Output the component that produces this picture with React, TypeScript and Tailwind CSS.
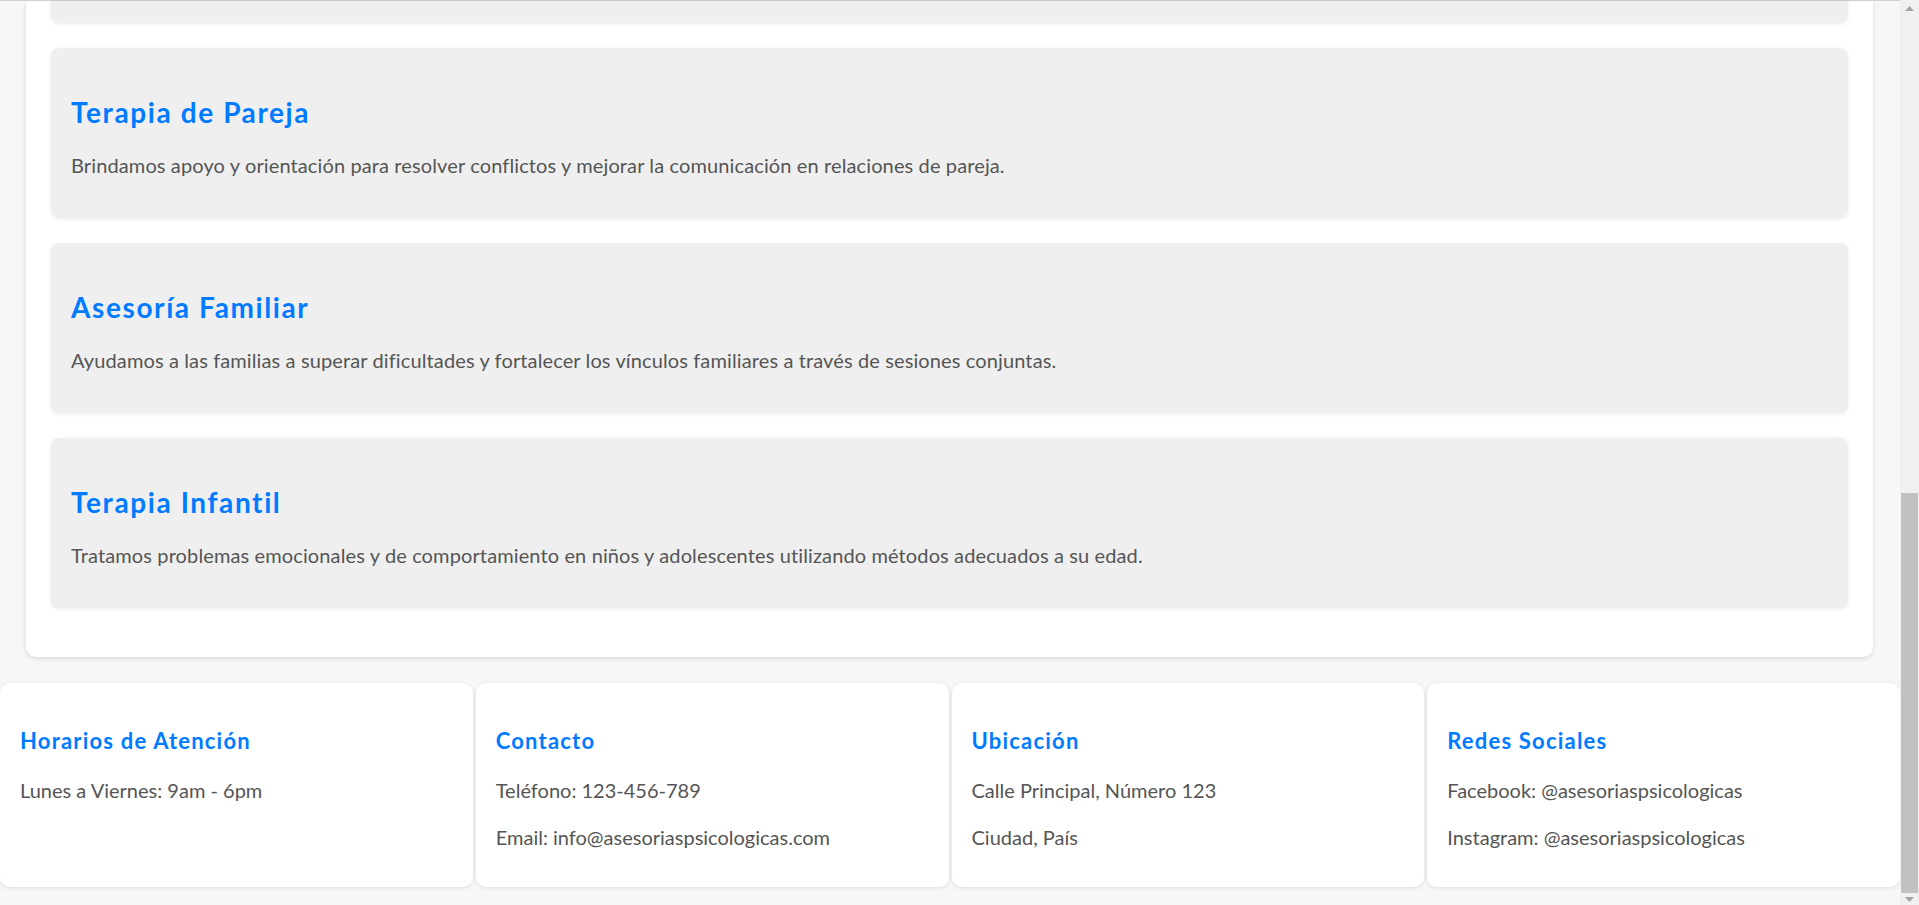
import React from "react";

const servicios = [
  {
    titulo: "Terapia de Pareja",
    texto:
      "Brindamos apoyo y orientación para resolver conflictos y mejorar la comunicación en relaciones de pareja.",
  },
  {
    titulo: "Asesoría Familiar",
    texto:
      "Ayudamos a las familias a superar dificultades y fortalecer los vínculos familiares a través de sesiones conjuntas.",
  },
  {
    titulo: "Terapia Infantil",
    texto:
      "Tratamos problemas emocionales y de comportamiento en niños y adolescentes utilizando métodos adecuados a su edad.",
  },
];

const footer = [
  { titulo: "Horarios de Atención", lineas: ["Lunes a Viernes: 9am - 6pm"] },
  {
    titulo: "Contacto",
    lineas: ["Teléfono: 123-456-789", "Email: info@asesoriaspsicologicas.com"],
  },
  { titulo: "Ubicación", lineas: ["Calle Principal, Número 123", "Ciudad, País"] },
  {
    titulo: "Redes Sociales",
    lineas: ["Facebook: @asesoriaspsicologicas", "Instagram: @asesoriaspsicologicas"],
  },
];

function Scrollbar() {
  return (
    <div className="flex w-[19px] shrink-0 flex-col bg-[#f0f0f0]">
      <div className="flex h-[17px] items-center justify-center">
        <svg width="9" height="5" viewBox="0 0 9 5">
          <path d="M0 5 L4.5 0 L9 5 Z" fill="#a3a3a3" />
        </svg>
      </div>
      <div className="flex-1 px-[1px] pt-[476px]">
        <div className="h-full bg-[#c1c1c1]" />
      </div>
      <div className="flex h-[12px] items-center justify-center">
        <svg width="9" height="5" viewBox="0 0 9 5">
          <path d="M0 0 L9 0 L4.5 5 Z" fill="#a3a3a3" />
        </svg>
      </div>
    </div>
  );
}

export default function App() {
  return (
    <div className="flex h-[905px] w-full overflow-hidden bg-[#f7f7f7] font-['Lato','Open_Sans',sans-serif] text-[#555]">
      <div className="flex min-w-0 flex-1 flex-col border-t border-[#d3d3d3]">
        <section className="ml-[26px] mr-[27px] rounded-b-[10px] bg-white px-[25px] pb-[49px] shadow-[0_2px_5px_rgba(0,0,0,0.12)]">
          <div className="h-[22px] rounded-b-[8px] bg-[#efefef] shadow-[0_1px_4px_rgba(0,0,0,0.08)]" />
          {servicios.map((s) => (
            <div
              key={s.titulo}
              className="mt-[25px] h-[170px] rounded-[8px] bg-[#efefef] px-[20px] pt-[47px] shadow-[0_1px_4px_rgba(0,0,0,0.08)]"
            >
              <h3 className="text-[28px] font-bold leading-[34px] tracking-[1.6px] text-[#007bff]">
                {s.titulo}
              </h3>
              <p className="mt-[21px] text-[20px] leading-[30px] tracking-[0.12px]">{s.texto}</p>
            </div>
          ))}
        </section>

        <footer className="mt-[26px] grid h-[204px] grid-cols-4 gap-[3px]">
          {footer.map((f) => (
            <div
              key={f.titulo}
              className="rounded-[10px] bg-white px-[20px] pt-[45px] shadow-[0_1px_4px_rgba(0,0,0,0.1)]"
            >
              <h4 className="text-[22px] font-bold leading-[26px] tracking-[1.2px] text-[#007bff]">
                {f.titulo}
              </h4>
              <div className="mt-[21px] flex flex-col gap-[17px]">
                {f.lineas.map((l) => (
                  <p key={l} className="text-[20px] leading-[30px]">
                    {l}
                  </p>
                ))}
              </div>
            </div>
          ))}
        </footer>
      </div>
      <Scrollbar />
    </div>
  );
}
